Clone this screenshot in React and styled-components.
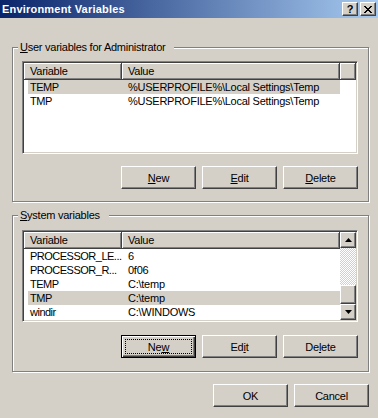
import React from 'react';
import styled, { createGlobalStyle, css } from 'styled-components';

const FACE = '#d4d0c8';
const SHADOW = '#808080';
const DARK = '#404040';

const GlobalStyle = createGlobalStyle`
  html, body {
    margin: 0;
    padding: 0;
    background: ${FACE};
  }
  body {
    font-family: "Liberation Sans", Arial, sans-serif;
    font-size: 11px;
    letter-spacing: -0.25px;
    color: #000;
  }
`;

const RAISED = css`
  border: 1px solid;
  border-color: #fff ${DARK} ${DARK} #fff;
  box-shadow: inset -1px -1px 0 ${SHADOW}, inset 1px 1px 0 ${FACE};
`;

const SUNKEN = css`
  border: 1px solid;
  border-color: ${SHADOW} #fff #fff ${SHADOW};
  box-shadow: inset 1px 1px 0 ${DARK}, inset -1px -1px 0 ${FACE};
`;

const Window = styled.div`
  display: flex;
  flex-direction: column;
  width: 378px;
  height: 418px;
  background: ${FACE};
  overflow: hidden;
`;

const TitleBar = styled.div`
  display: flex;
  align-items: center;
  height: 18px;
  padding: 0 2px 0 2px;
  background: linear-gradient(to right, #0a246a, #a6caf0);
`;

const Title = styled.span`
  flex: 1;
  color: #fff;
  font-weight: 700;
  font-size: 11px;
  letter-spacing: 0.2px;
`;

const CaptionButton = styled.div`
  ${RAISED};
  box-sizing: border-box;
  width: 16px;
  height: 14px;
  margin-left: ${({ $gap }) => $gap || 0}px;
  display: flex;
  align-items: center;
  justify-content: center;
  background: ${FACE};
  font-weight: 700;
  font-size: 11px;
  line-height: 1;
`;

const Content = styled.div`
  display: flex;
  flex-direction: column;
  padding: 29px 9px 0 12px;
`;

const GroupBox = styled.div`
  position: relative;
  display: flex;
  flex-direction: column;
  border: 1px solid ${SHADOW};
  box-shadow: inset 1px 1px 0 #fff, 1px 1px 0 #fff;
  padding: ${({ $pad }) => $pad};
  margin-bottom: ${({ $after }) => $after}px;
`;

const Legend = styled.span`
  position: absolute;
  top: -7px;
  left: 5px;
  padding: 0 9px 0 2px;
  background: ${FACE};
  line-height: 13px;
`;

const ListView = styled.div`
  ${SUNKEN};
  box-sizing: border-box;
  height: ${({ $height }) => $height}px;
  display: flex;
  background: #fff;
  padding: 1px;
  overflow: hidden;
`;

const ListBody = styled.div`
  flex: 1;
  display: flex;
  flex-direction: column;
`;

const HeaderRow = styled.div`
  display: flex;
  height: 17px;
`;

const HeaderCell = styled.div`
  box-sizing: border-box;
  width: ${({ $w }) => ($w ? `${$w}px` : 'auto')};
  flex: ${({ $w }) => ($w ? 'none' : 1)};
  padding-left: 6px;
  background: ${FACE};
  border-right: 1px solid ${DARK};
  border-bottom: 1px solid ${DARK};
  box-shadow: inset 1px 1px 0 #fff, inset -1px -1px 0 ${SHADOW};
  line-height: 16px;
  white-space: nowrap;
`;

const Row = styled.div`
  display: flex;
  height: 14px;
  width: 312px;
  margin-left: 4px;
  line-height: 14px;
  white-space: nowrap;
  background: ${({ $selected }) => ($selected ? FACE : 'transparent')};
`;

const NameCell = styled.span`
  width: 94px;
  flex: none;
  padding-left: 2px;
  box-sizing: border-box;
  letter-spacing: -0.5px;
`;

const ValueCell = styled.span`
  padding-left: 6px;
`;

const ScrollBar = styled.div`
  width: 16px;
  display: flex;
  flex-direction: column;
`;

const ScrollButton = styled.div`
  ${RAISED};
  box-sizing: border-box;
  height: ${({ $h }) => $h}px;
  display: flex;
  align-items: center;
  justify-content: center;
  background: ${FACE};
`;

const Track = styled.div`
  flex: 1;
  background: repeating-conic-gradient(${FACE} 0 25%, #fff 0 50%) 0 0 / 2px 2px;
`;

const ButtonRow = styled.div`
  display: flex;
  justify-content: flex-end;
  gap: 6px;
  margin-top: ${({ $top }) => $top}px;
`;

const Button = styled.div`
  ${RAISED};
  box-sizing: border-box;
  width: 75px;
  height: 23px;
  display: flex;
  align-items: center;
  justify-content: center;
  background: ${FACE};

  ${({ $focused }) =>
    $focused &&
    css`
      border: 1px solid #000;
      box-shadow: inset 1px 1px 0 #fff, inset -1px -1px 0 ${DARK},
        inset -2px -2px 0 ${SHADOW};
      outline: 1px dotted #000;
      outline-offset: -5px;
    `}
`;

const Arrow = ({ down }) => (
  <svg width="7" height="4" viewBox="0 0 7 4">
    <path d={down ? 'M0 0h7L3.5 4z' : 'M0 4h7L3.5 0z'} fill="#000" />
  </svg>
);

const CloseGlyph = () => (
  <svg width="8" height="7" viewBox="0 0 8 7">
    <path d="M0 0L7 7M1 0L8 7M7 0L0 7M8 0L1 7" stroke="#000" strokeWidth="1" />
  </svg>
);

const userVars = [
  { name: 'TEMP', value: '%USERPROFILE%\\Local Settings\\Temp', selected: true },
  { name: 'TMP', value: '%USERPROFILE%\\Local Settings\\Temp' }
];

const systemVars = [
  { name: 'PROCESSOR_LE...', value: '6' },
  { name: 'PROCESSOR_R...', value: '0f06' },
  { name: 'TEMP', value: 'C:\\temp' },
  { name: 'TMP', value: 'C:\\temp', selected: true },
  { name: 'windir', value: 'C:\\WINDOWS' }
];

const Rows = ({ items }) =>
  items.map(({ name, value, selected }) => (
    <Row key={name} $selected={selected}>
      <NameCell>{name}</NameCell>
      <ValueCell>{value}</ValueCell>
    </Row>
  ));

const App = () => (
  <>
    <GlobalStyle />
    <Window>
      <TitleBar>
        <Title>Environment Variables</Title>
        <CaptionButton>?</CaptionButton>
        <CaptionButton $gap={2}>
          <CloseGlyph />
        </CaptionButton>
      </TitleBar>

      <Content>
        <GroupBox $pad="13px 10px 12px 9px" $after={13}>
          <Legend>
            <u>U</u>ser variables for Administrator
          </Legend>
          <ListView $height={93}>
            <ListBody>
              <HeaderRow>
                <HeaderCell $w={98}>Variable</HeaderCell>
                <HeaderCell $w={218}>Value</HeaderCell>
                <HeaderCell />
              </HeaderRow>
              <Rows items={userVars} />
            </ListBody>
          </ListView>
          <ButtonRow $top={12}>
            <Button>
              <u>N</u>ew
            </Button>
            <Button>
              <u>E</u>dit
            </Button>
            <Button>
              <u>D</u>elete
            </Button>
          </ButtonRow>
        </GroupBox>

        <GroupBox $pad="14px 10px 13px 9px" $after={12}>
          <Legend>
            <u>S</u>ystem variables
          </Legend>
          <ListView $height={92}>
            <ListBody>
              <HeaderRow>
                <HeaderCell $w={98}>Variable</HeaderCell>
                <HeaderCell>Value</HeaderCell>
              </HeaderRow>
              <Rows items={systemVars} />
            </ListBody>
            <ScrollBar>
              <ScrollButton $h={16}>
                <Arrow />
              </ScrollButton>
              <Track />
              <ScrollButton $h={19} />
              <ScrollButton $h={16}>
                <Arrow down />
              </ScrollButton>
            </ScrollBar>
          </ListView>
          <ButtonRow $top={13}>
            <Button $focused>
              Ne<u>w</u>
            </Button>
            <Button>
              Ed<u>i</u>t
            </Button>
            <Button>
              De<u>l</u>ete
            </Button>
          </ButtonRow>
        </GroupBox>

        <ButtonRow $top={0}>
          <Button>OK</Button>
          <Button>Cancel</Button>
        </ButtonRow>
      </Content>
    </Window>
  </>
);

export default App;
